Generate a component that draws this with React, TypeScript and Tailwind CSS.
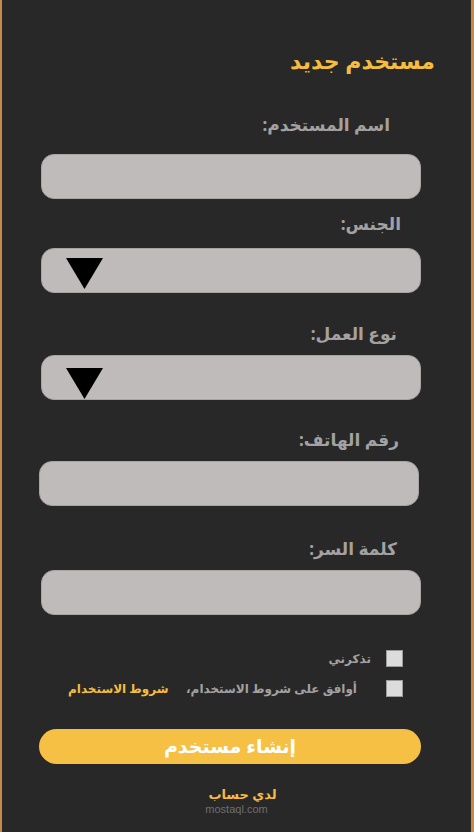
const FONT = { fontFamily: '"Noto Sans", "DejaVu Sans", sans-serif' };

function Field({ label, labelMr, labelMt, inputMt, inputMr = 50 }: { label: string; labelMr: number; labelMt: number; inputMt: number; inputMr?: number }) {
  return (
    <>
      <div className="h-[24px] text-[17px] font-bold leading-[24px] text-[#a3a1a1]" style={{ marginTop: labelMt, marginRight: labelMr }}>
        {label}
      </div>
      <div
        className="h-[45px] w-[380px] rounded-[13px] border border-[#a8a4a3] bg-[#bfbbba]"
        style={{ marginTop: inputMt, marginRight: inputMr }}
      />
    </>
  );
}

function SelectField({ label, labelMr, labelMt, inputMt, arrowTop }: { label: string; labelMr: number; labelMt: number; inputMt: number; arrowTop: number }) {
  return (
    <>
      <div className="h-[24px] text-[17px] font-bold leading-[24px] text-[#a3a1a1]" style={{ marginTop: labelMt, marginRight: labelMr }}>
        {label}
      </div>
      <div
        className="flex h-[45px] w-[380px] items-start justify-end rounded-[13px] border border-[#a8a4a3] bg-[#bfbbba] pl-[24px]"
        style={{ marginTop: inputMt, marginRight: 50, paddingTop: arrowTop }}
      >
        <svg width="37" height="31" viewBox="0 0 37 31">
          <polygon points="0,0 37,0 18.5,31" fill="#000" />
        </svg>
      </div>
    </>
  );
}

export default function App() {
  return (
    <div
      dir="rtl"
      className="h-[832px] w-[474px] overflow-hidden border-l-2 border-r-[3px] border-[#c48a48] bg-[#282828]"
      style={FONT}
    >
      <h1 className="mr-[36px] mt-[45px] h-[30px] text-[22px] font-bold leading-[30px] text-[#f5bd3f]">مستخدم جديد</h1>

      <Field label="اسم المستخدم:" labelMr={81} labelMt={38} inputMt={17} />
      <SelectField label="الجنس:" labelMr={70} labelMt={13} inputMt={12} arrowTop={9} />
      <SelectField label="نوع العمل:" labelMr={74} labelMt={29} inputMt={9} arrowTop={12} />
      <Field label="رقم الهاتف:" labelMr={72} labelMt={28} inputMt={9} inputMr={52} />
      <Field label="كلمة السر:" labelMr={74} labelMt={31} inputMt={9} />

      <div className="mr-[68px] mt-[35px] flex h-[17px] items-center gap-[15px]">
        <span className="h-[17px] w-[17px] shrink-0 border border-[#9b9b9b] bg-[#dcdcdc]" />
        <span className="whitespace-nowrap text-[12px] font-bold text-[#a3a1a1]">تذكرني</span>
      </div>
      <div className="ml-[66px] mr-[68px] mt-[13px] flex h-[17px] items-center">
        <span className="ml-[29px] h-[17px] w-[17px] shrink-0 border border-[#9b9b9b] bg-[#dcdcdc]" />
        <span className="whitespace-nowrap text-[12px] font-bold text-[#a3a1a1]">أوافق على شروط الاستخدام،</span>
        <span className="mr-auto whitespace-nowrap text-[12px] font-bold text-[#f5bd3f]">شروط الاستخدام</span>
      </div>

      <button className="ml-[37px] mr-[50px] mt-[32px] flex h-[35px] w-[382px] items-center justify-center rounded-[18px] bg-[#f5c044] text-[19px] font-bold text-white">
        إنشاء مستخدم
      </button>

      <div className="mt-[21px] pl-[12px] text-center text-[13px] font-bold leading-[18px] text-[#f5bd3f]">لدي حساب</div>
      <div className="-mt-[1px] text-center text-[11px] leading-[14px] text-[#6f6f6f]" style={{ fontFamily: '"Liberation Sans", sans-serif' }}>
        mostaql.com
      </div>
    </div>
  );
}
